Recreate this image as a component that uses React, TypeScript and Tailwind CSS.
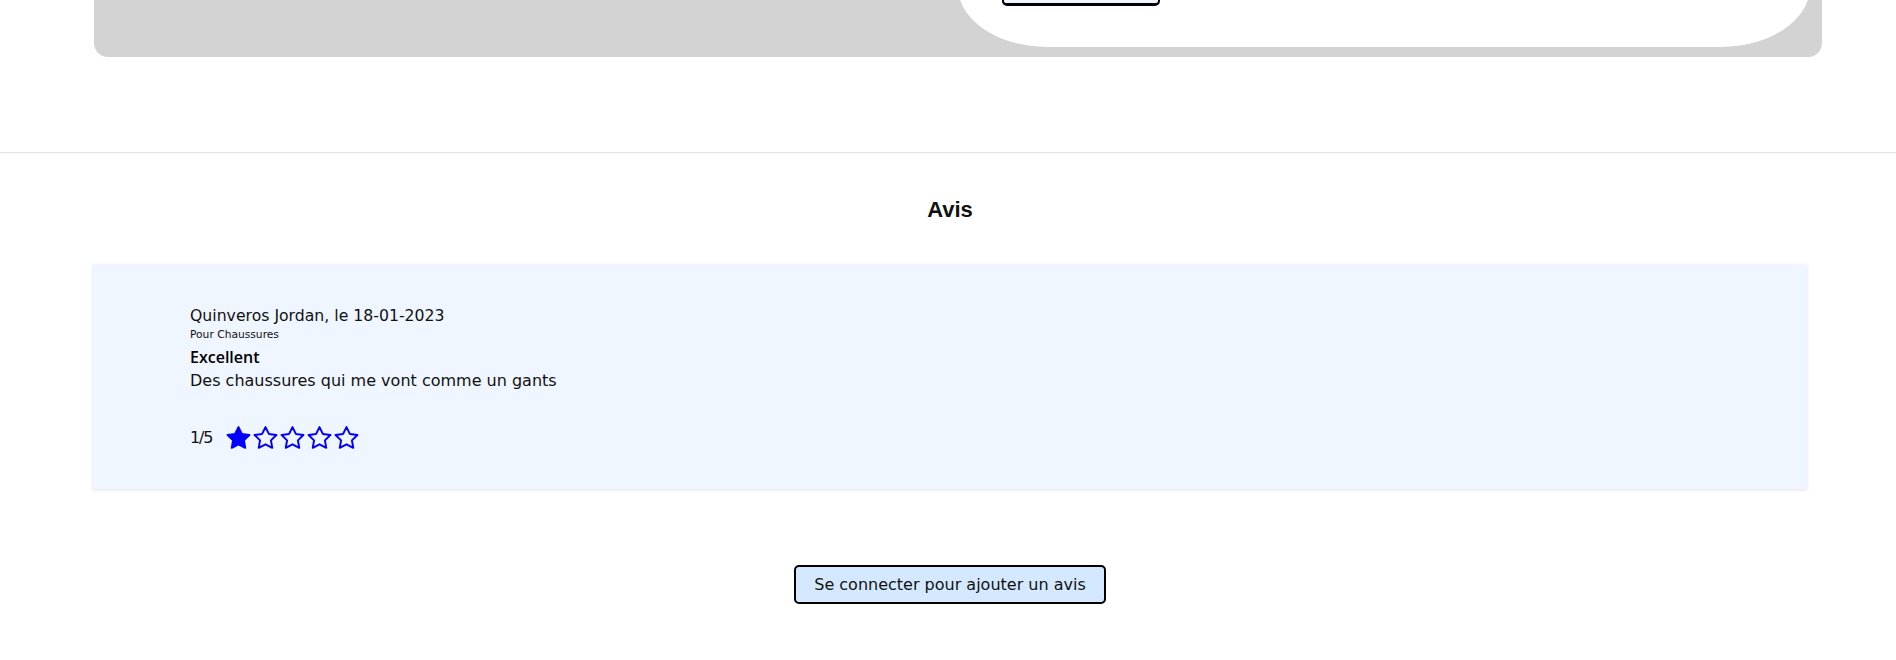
import React from "react";

const font = { fontFamily: '"DejaVu Sans", "Liberation Sans", sans-serif' };

function Star({ filled }: { filled: boolean }) {
  return (
    <svg width="25" height="24" viewBox="1 1 22 22" className="shrink-0">
      <polygon
        points="12,2 15.09,8.26 22,9.27 17,14.14 18.18,21.02 12,17.77 5.82,21.02 7,14.14 2,9.27 8.91,8.26"
        fill={filled ? "#0000ff" : "none"}
        stroke="#0000ff"
        strokeWidth="1.8"
        strokeLinejoin="round"
      />
    </svg>
  );
}

function Review({
  author,
  date,
  product,
  title,
  body,
  rating,
}: {
  author: string;
  date: string;
  product: string;
  title: string;
  body: string;
  rating: number;
}) {
  return (
    <div className="ml-[93px] mr-[89px] bg-[#eff6ff] pl-[97px] pt-[40px] pb-[39px] shadow-[0_1px_3px_rgba(0,0,0,0.12)]">
      <p className="text-[15.7px] leading-[24px] text-[#111]">
        {author}, le {date}
      </p>
      <p className="text-[10.7px] leading-[14px] text-[#111]">Pour {product}</p>
      <p
        className="mt-[3px] text-[16px] font-semibold leading-[24px] text-black"
        style={{ fontFamily: '"Open Sans", sans-serif' }}
      >
        {title}
      </p>
      <p className="text-[16px] leading-[24px] text-[#111]">{body}</p>
      <div className="mt-[33px] flex h-[24px] items-center">
        <span className="mr-[14px] text-[16px] tracking-[-1.2px] text-[#111]">{rating}/5</span>
        <div className="flex gap-[2px]">
          {[1, 2, 3, 4, 5].map((i) => (
            <Star key={i} filled={i <= rating} />
          ))}
        </div>
      </div>
    </div>
  );
}

export default function App() {
  return (
    <div className="min-h-[660px] bg-white" style={font}>
      {/* bloc produit, seule la fin est visible */}
      <div className="ml-[94px] mr-[74px] -mt-[300px] grid h-[357px] grid-cols-2 rounded-[14px] bg-[#d3d3d3]">
        <div />
        <div className="mb-[10px] mr-[12px] flex flex-col justify-end rounded-[90px_90px_90px_90px/60px_60px_60px_60px] bg-white pb-[41px] pl-[44px]">
          <button className="h-[40px] w-[158px] rounded-[5px] border-2 border-b-[3px] border-black bg-[#eff6ff]" />
        </div>
      </div>

      <div className="mt-[95px] border-t border-[#e3e3e3] shadow-[0_1px_2px_rgba(0,0,0,0.05)]" />

      <h2
        className="pt-[41px] pb-[38px] pl-[4px] text-center text-[22px] font-bold leading-[32px] text-[#111]"
        style={{ fontFamily: '"Liberation Sans", Arial, sans-serif' }}
      >
        Avis
      </h2>

      <Review
        author="Quinveros Jordan"
        date="18-01-2023"
        product="Chaussures"
        title="Excellent"
        body="Des chaussures qui me vont comme un gants"
        rating={1}
      />

      <div className="mt-[76px] flex justify-center pl-[4px]">
        <button className="h-[39px] w-[312px] rounded-[5px] border-2 border-black bg-[#d4e9ff] text-[16px] text-[#111]">
          Se connecter pour ajouter un avis
        </button>
      </div>
    </div>
  );
}
